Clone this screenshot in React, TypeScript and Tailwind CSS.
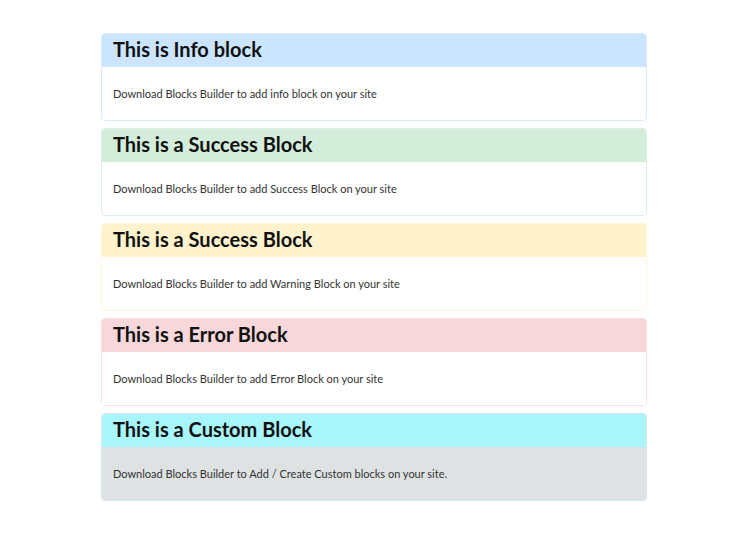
const blocks = [
  {
    title: "This is Info block",
    text: "Download Blocks Builder to add info block on your site",
    head: "bg-[#cce5ff]",
    body: "bg-white",
    border: "border-[#d6e9ff]",
  },
  {
    title: "This is a Success Block",
    text: "Download Blocks Builder to add Success Block on your site",
    head: "bg-[#d4edda]",
    body: "bg-white",
    border: "border-[#dcefe1]",
  },
  {
    title: "This is a Success Block",
    text: "Download Blocks Builder to add Warning Block on your site",
    head: "bg-[#fff3cd]",
    body: "bg-white",
    border: "border-[#fff6da]",
  },
  {
    title: "This is a Error Block",
    text: "Download Blocks Builder to add Error Block on your site",
    head: "bg-[#f8d7da]",
    body: "bg-white",
    border: "border-[#f9e0e2]",
  },
  {
    title: "This is a Custom Block",
    text: "Download Blocks Builder to Add / Create Custom blocks on your site.",
    head: "bg-[#a9f5fc]",
    body: "bg-[#dee2e3]",
    border: "border-[#d6e6ee]",
  },
];

export default function App() {
  return (
    <div className="min-h-[536px] bg-white font-['Lato','Open_Sans',sans-serif] text-[#212529]">
      <div className="w-[546px] ml-[101px] pt-[33px] flex flex-col gap-[7px]">
        {blocks.map((b, i) => (
          <div key={i} className={`rounded-[4px] border overflow-hidden ${b.border}`}>
            <div className={`h-[33px] px-[11px] pb-[3px] flex items-center ${b.head}`}>
              <h2 className="text-[20px] font-bold leading-none text-[#111]">{b.title}</h2>
            </div>
            <div className={`h-[53px] px-[11px] pt-[2px] flex items-center ${b.body}`}>
              <p className="text-[11px] text-[#333]">{b.text}</p>
            </div>
          </div>
        ))}
      </div>
    </div>
  );
}
